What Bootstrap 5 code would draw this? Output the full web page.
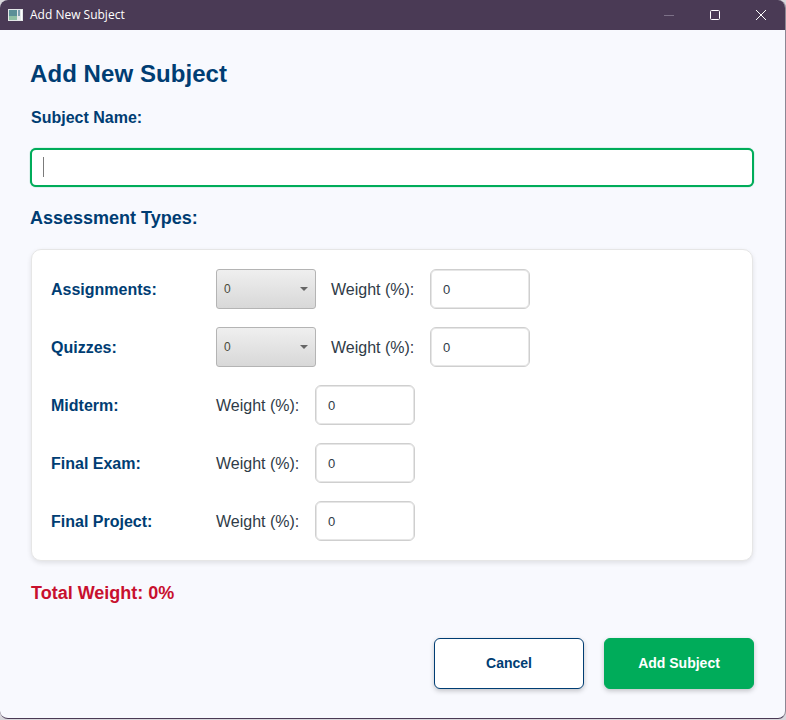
<!DOCTYPE html>
<html lang="en">
<head>
  <meta charset="UTF-8" />
  <title>Add New Subject</title>
  <meta name="viewport" content="width=device-width, initial-scale=1">
  <link href="https://cdn.jsdelivr.net/npm/bootstrap@5.3.3/dist/css/bootstrap.min.css" rel="stylesheet">
  <style>
    html, body {
      height: 100%;
      margin: 0;
      background-color: #d9d7dc;
      font-family: "Liberation Sans", Arial, sans-serif;
      overflow: hidden;
    }
    .app-window {
      width: 786px;
      height: 719px;
      background-color: #f8f9fe;
      border-right: 1px solid #8d8794;
      border-bottom: 1px solid #4a3a55;
      border-radius: 8px;
      overflow: hidden;
    }
    .title-bar {
      height: 30px;
      background-color: #4a3a55;
      color: #fff;
      font-family: "Open Sans", "Liberation Sans", sans-serif;
      font-size: 12px;
      padding: 0 1px 0 8px;
    }
    .title-icon { margin-right: 7px; }
    .win-btn {
      width: 46px;
      height: 30px;
    }
    .window-body { padding: 29px 31px 0 30px; }
    .page-title {
      color: #003d73;
      font-size: 24px;
      font-weight: 700;
      line-height: 30px;
      letter-spacing: 0.07px;
      margin: 0;
    }
    .field-title {
      color: #003d73;
      font-size: 16px;
      font-weight: 700;
      line-height: 20px;
      margin: 19px 0 20px 1px;
    }
    .name-input {
      height: 39px;
      border: 2px solid #00ac5a;
      border-radius: 6px;
      background-color: #fff;
      box-shadow: 0 0 1px #00ac5a;
      padding: 7px 11px;
    }
    .text-caret {
      width: 1px;
      height: 20px;
      background-color: #7b7b7b;
    }
    .section-title {
      color: #003d73;
      font-size: 18px;
      font-weight: 700;
      line-height: 22px;
      margin: 20px 0 20px;
    }
    .types-panel {
      margin-left: 1px;
      width: 722px;
      height: 312px;
      padding: 19px 19px;
      background-color: #fff;
      border: 1px solid #e6e6e6;
      border-radius: 10px;
      box-shadow: 0 2px 5px rgba(0, 0, 0, 0.1);
    }
    .type-row { height: 40px; }
    .type-label {
      width: 165px;
      padding-top: 2px;
      color: #003d73;
      font-size: 16px;
      font-weight: 700;
    }
    .combo-box {
      width: 100px;
      height: 40px;
      margin-right: 15px;
      padding: 0 7px;
      border: 1px solid #b4b4b4;
      border-radius: 3px;
      background: linear-gradient(#efefef, #d8d8d8);
      color: #4a4a3a;
      font-size: 12px;
    }
    .combo-arrow {
      width: 0;
      height: 0;
      border-left: 4.5px solid transparent;
      border-right: 4.5px solid transparent;
      border-top: 4px solid #666;
    }
    .weight-label {
      width: 99px;
      padding-top: 2px;
      color: #2f3b47;
      font-size: 16px;
    }
    .weight-input {
      width: 100px;
      height: 40px;
      padding: 1px 11px 0;
      background-color: #fff;
      border: 1px solid #cfcfcf;
      box-shadow: inset 0 0 0 1px #e6e6e6;
      border-radius: 6px;
      color: #2f3b47;
      font-size: 13px;
    }
    .weight-input span { padding-left: 1px; }
    .total-weight {
      color: #c8102e;
      font-size: 18px;
      font-weight: 700;
      line-height: 22px;
      margin: 21px 0 34px 1px;
    }
    .action-btn {
      width: 150px;
      height: 51px;
      font-size: 14px;
      font-weight: 700;
      border-radius: 6px;
      box-shadow: 0 2px 5px rgba(0, 0, 0, 0.22);
    }
    .btn-cancel {
      background-color: #fff;
      border: 1px solid #003d73;
      color: #003d73;
    }
    .btn-add {
      background-color: #00ac5a;
      border: 1px solid #00ac5a;
      color: #fff;
    }
    .btn-row { gap: 20px; }
  </style>
</head>
<body>
  <div class="app-window">
    <div class="title-bar d-flex align-items-center">
      <svg class="title-icon" width="15" height="12" viewBox="0 0 15 12">
        <rect width="15" height="12" fill="#e4e8e8"/>
        <rect x="1" y="1" width="8" height="10" fill="#5b8f97"/>
        <rect x="1" y="7" width="8" height="4" fill="#8fbfa4"/>
        <rect x="10" y="1" width="2" height="6" fill="#7d9fb0"/>
        <rect x="13" y="1" width="1" height="10" fill="#ffffff"/>
      </svg>
      <span>Add New Subject</span>
      <div class="ms-auto d-flex">
        <div class="win-btn d-flex align-items-center justify-content-center">
          <svg width="12" height="12" viewBox="0 0 12 12"><path d="M1 6.5h10" stroke="#7d7188" stroke-width="1"/></svg>
        </div>
        <div class="win-btn d-flex align-items-center justify-content-center">
          <svg width="12" height="12" viewBox="0 0 12 12"><rect x="1.5" y="1.5" width="9" height="9" rx="1" fill="none" stroke="#fff" stroke-width="1"/></svg>
        </div>
        <div class="win-btn d-flex align-items-center justify-content-center">
          <svg width="12" height="12" viewBox="0 0 12 12"><path d="M1 1l10 10M11 1L1 11" stroke="#fff" stroke-width="1"/></svg>
        </div>
      </div>
    </div>
    <div class="window-body">
      <h1 class="page-title">Add New Subject</h1>
      <div class="field-title">Subject Name:</div>
      <div class="name-input"><div class="text-caret"></div></div>
      <div class="section-title">Assessment Types:</div>
      <div class="types-panel d-flex flex-column justify-content-between">
        <div class="type-row d-flex align-items-center">
          <div class="type-label">Assignments:</div>
          <div class="combo-box d-flex align-items-center justify-content-between"><span>0</span><span class="combo-arrow"></span></div>
          <div class="weight-label">Weight (%):</div>
          <div class="weight-input d-flex align-items-center"><span>0</span></div>
        </div>
        <div class="type-row d-flex align-items-center">
          <div class="type-label">Quizzes:</div>
          <div class="combo-box d-flex align-items-center justify-content-between"><span>0</span><span class="combo-arrow"></span></div>
          <div class="weight-label">Weight (%):</div>
          <div class="weight-input d-flex align-items-center"><span>0</span></div>
        </div>
        <div class="type-row d-flex align-items-center">
          <div class="type-label">Midterm:</div>
          <div class="weight-label">Weight (%):</div>
          <div class="weight-input d-flex align-items-center"><span>0</span></div>
        </div>
        <div class="type-row d-flex align-items-center">
          <div class="type-label">Final Exam:</div>
          <div class="weight-label">Weight (%):</div>
          <div class="weight-input d-flex align-items-center"><span>0</span></div>
        </div>
        <div class="type-row d-flex align-items-center">
          <div class="type-label">Final Project:</div>
          <div class="weight-label">Weight (%):</div>
          <div class="weight-input d-flex align-items-center"><span>0</span></div>
        </div>
      </div>
      <div class="total-weight">Total Weight: 0%</div>
      <div class="btn-row d-flex justify-content-end">
        <button class="btn action-btn btn-cancel" type="button">Cancel</button>
        <button class="btn action-btn btn-add" type="button">Add Subject</button>
      </div>
    </div>
  </div>
  <script src="https://cdn.jsdelivr.net/npm/bootstrap@5.3.3/dist/js/bootstrap.bundle.min.js"></script>
</body>
</html>
